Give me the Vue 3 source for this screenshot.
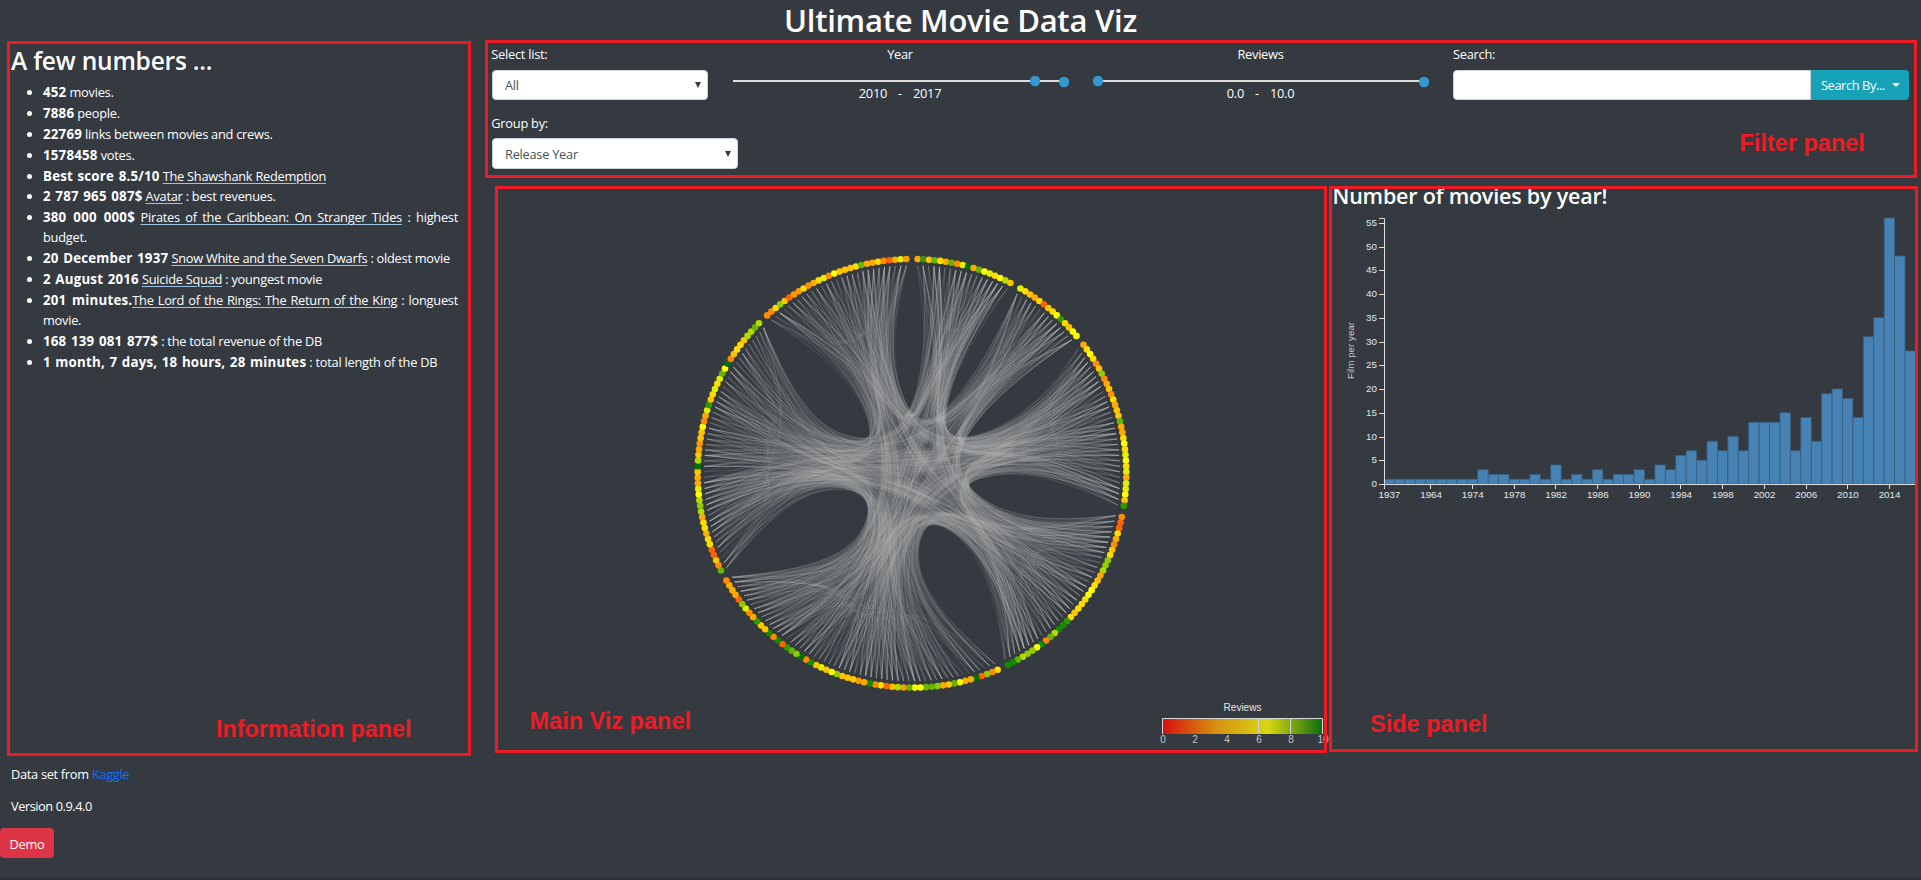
<script setup>
const stats = [
  { strong: '452', rest: ' movies.' },
  { strong: '7886', rest: ' people.' },
  { strong: '22769', rest: ' links between movies and crews.' },
  { strong: '1578458', rest: ' votes.' },
  { strong: 'Best score 8.5/10', gap: ' ', link: 'The Shawshank Redemption' },
  { strong: '2 787 965 087$', gap: ' ', link: 'Avatar', rest: ' : best revenues.' },
  { strong: '380 000 000$', gap: ' ', link: 'Pirates of the Caribbean: On Stranger Tides', rest: ' : highest budget.' },
  { strong: '20 December 1937', gap: ' ', link: 'Snow White and the Seven Dwarfs', rest: ' : oldest movie' },
  { strong: '2 August 2016', gap: ' ', link: 'Suicide Squad', rest: ' : youngest movie' },
  { strong: '201 minutes.', gap: '', link: 'The Lord of the Rings: The Return of the King', rest: ' : longuest movie.' },
  { strong: '168 139 081 877$', rest: ' : the total revenue of the DB' },
  { strong: '1 month, 7 days, 18 hours, 28 minutes', rest: ' : total length of the DB' },
]

/* Review score colours, one letter per movie, one string per group */
const palette = {
  r: '#ff6400', d: '#ff8c00', e: '#ff9900', o: '#ffaa00', a: '#ffc400', y: '#ffdc00', b: '#ffff00',
  l: '#e2ef00', m: '#b4da00', n: '#90cc00', h: '#66b300', g: '#2f9900', G: '#148a00', K: '#007300',
}
const groups = [
  'ogahyohdlKohblybma',
  'lyaoyraybgyabb',
  'oybydandoadyoaahooybylbylollbag',
  'drryodaynnmoaybbyyyaygGGmhdGbnnmhGG',
  'ydnrKoobhaonhhbbhemarydGoeaaanbalaGdKnhgrGdGaagodlnroood',
  'hdarryyoyyomnmblooaKmaoeaabdolgaylylhbKdayyammhm',
  'ddynareeydoyldbaaayhooydrole',
]

const CX = 417
const CY = 287.3
const DOT_R = 214.3
const LEAF_R = 208
const units = groups.reduce((n, g) => n + g.length + 1, 0)
const polar = (u, r) => {
  const a = (u / units) * 2 * Math.PI
  return [CX + r * Math.sin(a), CY - r * Math.cos(a)]
}

const leaves = []
const hubs = []
let unit = 1
groups.forEach((codes, gi) => {
  hubs.push(polar(unit + (codes.length - 1) / 2, LEAF_R / 2))
  for (const c of codes) {
    const [x, y] = polar(unit, DOT_R)
    leaves.push({ x, y, fill: palette[c], end: polar(unit, LEAF_R), group: gi })
    unit++
  }
  unit++
})

let seed = 20177
const rand = () => {
  seed = (seed * 1664525 + 1013904223) % 4294967296
  return seed / 4294967296
}

/* Straightened control polygon rendered as a uniform B-spline */
const BETA = 0.85
function bundle(points) {
  const n = points.length - 1
  const [s, e] = [points[0], points[n]]
  const p = points.map((q, i) => [0, 1].map(k => BETA * q[k] + (1 - BETA) * (s[k] + (i / n) * (e[k] - s[k]))))
  const mix = (...terms) => [0, 1].map(k => terms.reduce((t, [w, q]) => t + w * q[k], 0).toFixed(1)).join(',')
  let d = `M${mix([1, p[0]])}L${mix([5 / 6, p[0]], [1 / 6, p[1]])}`
  for (let i = 1; i <= n; i++) {
    const a = p[i - 1]
    const b = p[i]
    const c = p[Math.min(i + 1, n)]
    d += `C${mix([2 / 3, a], [1 / 3, b])} ${mix([1 / 3, a], [2 / 3, b])} ${mix([1 / 6, a], [4 / 6, b], [1 / 6, c])}`
  }
  return d + `L${mix([1, p[n]])}`
}

const weights = leaves.map(() => 0.2 + rand())
const pick = () => {
  for (;;) {
    const i = Math.floor(rand() * leaves.length)
    if (rand() * 1.2 < weights[i]) return leaves[i]
  }
}
const links = []
while (links.length < 2700) {
  const a = pick()
  const b = pick()
  if (a === b || (a.group === b.group && rand() < 0.5)) continue
  links.push(
    a.group === b.group
      ? bundle([a.end, hubs[a.group], b.end])
      : bundle([a.end, hubs[a.group], [CX, CY], hubs[b.group], b.end])
  )
}

/* Histogram */
const counts = [
  1, 1, 1, 1, 1, 1, 1, 1, 1, 3, 2, 2, 1, 1, 2, 1, 4, 1, 2, 1, 3, 1, 2, 2, 3, 1, 4, 3, 6, 7, 5, 9, 7, 10, 7,
  13, 13, 13, 15, 7, 14, 9, 19, 20, 18, 14, 31, 35, 56, 48, 28,
]
const STEP = 10.42
const X0 = 55
const Y0 = 298
const UNIT = 4.75
const yTicks = Array.from({ length: 12 }, (_, i) => ({ v: i * 5, y: Math.round(Y0 - i * 5 * UNIT) + 0.5 }))
const years = [1937, 1964, 1974, 1978, 1982, 1986, 1990, 1994, 1998, 2002, 2006, 2010, 2014]
const xTicks = years.map((v, i) => ({ v, x: X0 + STEP * (i * 4 + 0.5) }))
</script>

<template>
  <div class="page">
    <h1>Ultimate Movie Data Viz</h1>
    <div class="columns">
      <aside>
        <section class="panel info">
          <h2>A few numbers ...</h2>
          <ul>
            <li v-for="s in stats" :key="s.strong"><b>{{ s.strong }}</b>{{ s.gap }}<a v-if="s.link">{{ s.link }}</a>{{ s.rest }}</li>
          </ul>
          <div class="tag">Information panel</div>
        </section>
        <footer>
          <p>Data set from <a>Kaggle</a></p>
          <p class="version">Version 0.9.4.0</p>
          <button class="demo">Demo</button>
        </footer>
      </aside>

      <main>
        <section class="panel filters">
          <div class="row">
            <div class="field list">
              <label>Select list:</label>
              <div class="select"><span>All</span><i></i></div>
            </div>
            <div class="field year">
              <label>Year</label>
              <svg width="341" height="12" viewBox="0 0 341 12">
                <path d="M5 5H336" stroke="#ddd" stroke-width="2" />
                <circle cx="307" cy="5" r="5.2" fill="#3498d0" />
                <circle cx="336" cy="6" r="5.2" fill="#3498d0" />
              </svg>
              <div class="range"><span>2010</span><span>-</span><span>2017</span></div>
            </div>
            <div class="field reviews">
              <label>Reviews</label>
              <svg width="336" height="12" viewBox="0 0 336 12">
                <path d="M5 5H331" stroke="#ddd" stroke-width="2" />
                <circle cx="5" cy="5" r="5.2" fill="#3498d0" />
                <circle cx="331" cy="6" r="5.2" fill="#3498d0" />
              </svg>
              <div class="range"><span>0.0</span><span>-</span><span>10.0</span></div>
            </div>
            <div class="field search">
              <label>Search:</label>
              <div class="group"><div class="input"></div><button>Search By...<i></i></button></div>
            </div>
          </div>
          <div class="field by">
            <label>Group by:</label>
            <div class="select"><span>Release Year</span><i></i></div>
          </div>
          <div class="tag">Filter panel</div>
        </section>

        <div class="charts">
          <section class="panel viz">
            <svg class="canvas" width="832" height="567" viewBox="0 0 832 567">
              <defs>
                <linearGradient id="scores">
                  <stop offset="0" stop-color="#d90f0f" />
                  <stop offset="0.33" stop-color="#d69010" />
                  <stop offset="0.66" stop-color="#d8d810" />
                  <stop offset="1" stop-color="#0c6c10" />
                </linearGradient>
              </defs>
              <g class="links"><path v-for="(d, i) in links" :key="i" :d="d" /></g>
              <circle v-for="(l, i) in leaves" :key="i" :cx="l.x" :cy="l.y" r="3.3" :fill="l.fill" />
              <g class="legend">
                <text x="747.5" y="525" class="legend-title">Reviews</text>
                <rect x="667.5" y="532" width="160" height="16" fill="url(#scores)" />
                <path d="M667.5 548V532.5H827.5V548M763.5 532V548M795.5 532V548" />
                <text v-for="i in 6" :key="i" :x="668 + (i - 1) * 32" y="557">{{ (i - 1) * 2 }}</text>
              </g>
            </svg>
            <div class="tag">Main Viz panel</div>
          </section>

          <section class="panel side">
            <h3>Number of movies by year!</h3>
            <svg class="hist" width="589" height="320" viewBox="0 0 589 320">
              <rect v-for="(c, i) in counts" :key="i" class="bar" :x="X0 + i * STEP" :y="Y0 - c * UNIT" :width="STEP" :height="c * UNIT" />
              <path class="axis" :d="`M50 32.5H55.5V${Y0 + 0.5}H589`" />
              <g v-for="t in yTicks" :key="t.v">
                <path class="tick" :d="`M50 ${t.y}h5`" />
                <text x="48" :y="t.y + 2.7" text-anchor="end">{{ t.v }}</text>
              </g>
              <g v-for="(t, i) in xTicks" :key="t.v">
                <path class="tick" :d="`M${i ? Math.floor(t.x) + 0.5 : 55.5} ${Y0}v5`" />
                <text :x="t.x + 0.2" :y="Y0 + 13.5" text-anchor="middle">{{ t.v }}</text>
              </g>
              <text class="y-title" text-anchor="middle" transform="translate(25.2 164.5) rotate(-90)">Film per year</text>
            </svg>
            <div class="tag">Side panel</div>
          </section>
        </div>
      </main>
    </div>
  </div>
</template>

<style>
html, body { background: #343a40; overflow: hidden; }
</style>

<style scoped>
.page {
  height: 880px;
  overflow: hidden;
  background: #343a40;
  border-bottom: 2px solid #2c3035;
  box-sizing: border-box;
  color: #fff;
  font: 12.8px/20px "Open Sans", "Noto Sans", sans-serif;
  letter-spacing: -0.25px;
}
h1 { margin: 0; height: 40px; font-size: 31px; line-height: 41px; font-weight: 600; letter-spacing: -0.25px; text-align: center; }
.columns { display: flex; gap: 14px; padding-left: 7px; }
aside { width: 464px; flex: none; }
.panel { position: relative; box-sizing: border-box; }
.panel::after { content: ""; position: absolute; inset: 0; border: 3px solid #ed1c24; pointer-events: none; }
.tag { position: absolute; color: #ed1c24; font: bold 23.5px/28px "Liberation Sans", Arial, sans-serif; letter-spacing: 0; white-space: nowrap; }

.info { margin-top: 1px; height: 715px; padding: 2px 13px 0 4px; }
h2 { margin: 0; font-size: 24.5px; line-height: 36px; font-weight: 600; letter-spacing: -0.2px; }
ul { margin: 3px 0 0; padding-left: 32px; text-align: justify; }
li { margin-bottom: 0.9px; }
li b { font-size: 13.3px; line-height: 16px; letter-spacing: 0.2px; word-spacing: 0.9px; }
li a { text-decoration: underline; text-decoration-color: #9cc4e4; text-underline-offset: 2px; }
.info .tag { left: 209px; top: 674px; font-size: 23.3px; }
footer { margin-left: -7px; }
footer p { margin: 0 0 12px 11px; }
footer p:first-child { margin-top: 8px; letter-spacing: -0.3px; }
footer .version { letter-spacing: -0.45px; }
footer a { color: #0f70ff; }
button { border: 0; color: #fff; font: inherit; letter-spacing: inherit; }
.demo { display: block; width: 54px; height: 30px; margin-top: 1px; padding: 2px 0 0; background: #dc3545; border-radius: 4px; }

main { flex: none; width: 1433px; }
.filters { width: 1432px; height: 138px; padding: 4px 8px 0 7px; }
.row { display: flex; height: 70px; }
.field label { display: block; height: 26px; line-height: 20px; }
.list label, .by label { text-indent: -0.7px; }
.list { width: 216px; }
.select { display: flex; align-items: center; justify-content: space-between; box-sizing: border-box; height: 30px; padding: 0 6px 0 12px; background: #fff; border: 1px solid #ced4da; border-radius: 4px; color: #495057; }
.select i { border: 3.2px solid transparent; border-top: 6px solid #343a40; border-bottom: 0; }
.year, .reviews { text-align: center; }
.year { margin-left: 20px; width: 341px; }
.year label { padding-left: 3px; }
.year .range { padding-left: 3px; }
.field svg { display: block; margin-top: 6px; }
.reviews { margin-left: 24px; width: 336px; }
.reviews label, .reviews .range { padding-right: 1px; }
.year .range, .reviews .range { display: flex; justify-content: center; gap: 11px; margin-top: -5px; }
.search { margin-left: 24px; width: 456px; }
.group { display: flex; height: 30px; }
.input { flex: 1; box-sizing: border-box; background: #fff; border: 1px solid #ced4da; border-radius: 4px 0 0 4px; }
.group button { display: flex; align-items: center; width: 98px; padding: 0 0 0 10px; background: #17a2b8; border-radius: 0 4px 4px 0; letter-spacing: -0.4px; }
.group i { margin-left: 7px; border: 4px solid transparent; border-top-color: #fff; border-bottom: 0; }
.by { width: 246px; margin-top: -1px; }
.by label { height: 25px; }
.by .select { height: 31px; }
.filters .tag { left: 1254.5px; top: 89px; }

.charts { display: flex; gap: 2px; margin: 8px 0 0 10px; }
.viz { width: 832px; height: 567px; }
.canvas { display: block; overflow: visible; }
.links path { fill: none; stroke: #b4b4b4; stroke-opacity: 0.07; stroke-width: 1; }
.legend path { fill: none; stroke: #d5d8da; }
.legend text { fill: #c4c7ca; font: 10px "Liberation Sans", Arial, sans-serif; letter-spacing: 0; text-anchor: middle; }
.legend .legend-title { fill: #e4e6e8; }
.viz .tag { left: 34.5px; top: 521px; }

.side { width: 589px; height: 566px; }
h3 { margin: 0; padding-left: 3.5px; height: 0; font-size: 21.5px; line-height: 20px; font-weight: 600; letter-spacing: -0.2px; white-space: nowrap; }
.hist { display: block; }
.hist text { fill: #e6e8ea; font: 9.8px "Liberation Sans", Arial, sans-serif; letter-spacing: 0; }
.hist .y-title { fill: #c5c8cb; }
.bar { fill: #4682b4; stroke: #3b5f80; stroke-width: 0.8; }
.axis, .tick { fill: none; stroke: #dcdfe2; }
.side .tag { left: 41px; top: 524px; }
</style>
